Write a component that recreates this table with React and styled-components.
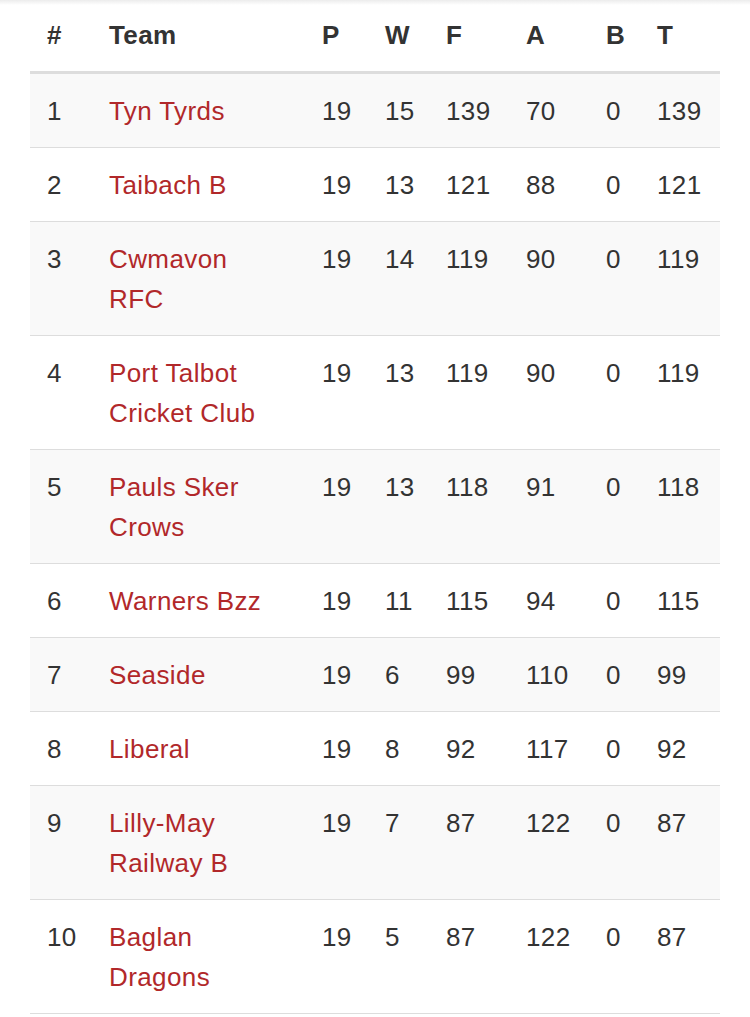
import React from 'react'
import styled, { createGlobalStyle } from 'styled-components';

const GlobalStyle = createGlobalStyle`
  html, body {
    margin:0;
    padding:0;
    background:#fff;
  }
  body {
    font-family:"Liberation Sans", Arial, Helvetica, sans-serif;
    color:#333;
  }
`;

const columns = [
  { key: 'pos', label: '#', width: 62 },
  { key: 'team', label: 'Team', width: 213 },
  { key: 'p', label: 'P', width: 63 },
  { key: 'w', label: 'W', width: 61 },
  { key: 'f', label: 'F', width: 80 },
  { key: 'a', label: 'A', width: 80 },
  { key: 'b', label: 'B', width: 51 },
  { key: 't', label: 'T', width: 80 },
];

// team names split where the reference wraps them
const rows = [
  [1, ['Tyn Tyrds'], 19, 15, 139, 70, 0, 139],
  [2, ['Taibach B'], 19, 13, 121, 88, 0, 121],
  [3, ['Cwmavon', 'RFC'], 19, 14, 119, 90, 0, 119],
  [4, ['Port Talbot', 'Cricket Club'], 19, 13, 119, 90, 0, 119],
  [5, ['Pauls Sker', 'Crows'], 19, 13, 118, 91, 0, 118],
  [6, ['Warners Bzz'], 19, 11, 115, 94, 0, 115],
  [7, ['Seaside'], 19, 6, 99, 110, 0, 99],
  [8, ['Liberal'], 19, 8, 92, 117, 0, 92],
  [9, ['Lilly-May', 'Railway B'], 19, 7, 87, 122, 0, 87],
  [10, ['Baglan', 'Dragons'], 19, 5, 87, 122, 0, 87],
];

export default function App() {
  return (
    <>
      <GlobalStyle />
      <Page>
        <LeagueTable>
          <colgroup>
            {columns.map((c) => <col key={c.key} style={{width: c.width}} />)}
          </colgroup>
          <thead>
            <tr>
              {columns.map((c) => <HeadCell key={c.key}>{c.label}</HeadCell>)}
            </tr>
          </thead>
          <tbody>
            {rows.map((row, i) => (
              <Row key={row[0]} $striped={i % 2 === 0}>
                {row.map((value, j) => (
                  <Cell key={j}>
                    {j === 1 ? (
                      <TeamLink href="#">
                        {value.map((line, k) => <TeamLine key={k}>{line}</TeamLine>)}
                      </TeamLink>
                    ) : value}
                  </Cell>
                ))}
              </Row>
            ))}
          </tbody>
        </LeagueTable>
      </Page>
    </>
  )
}

const Page = styled.div`
  width:750px;
  min-height:1017px;
  padding:0 30px;
  box-sizing:border-box;
  background:linear-gradient(to bottom, #ececec 0, #fff 5px);
`;

const LeagueTable = styled.table`
  width:690px;
  table-layout:fixed;
  border-collapse:collapse;
  font-family:"Liberation Sans", Arial, Helvetica, sans-serif;
  font-size:26px;
  line-height:40px;
  letter-spacing:0.4px;
  color:#333;
`;

const HeadCell = styled.th`
  text-align:left;
  font-weight:700;
  font-family:inherit;
  color:#333;
  padding:15px 17px 16px;
  border-bottom:3px solid #ddd;
  vertical-align:bottom;
`;

const Row = styled.tr`
  background:${props => props.$striped ? '#f9f9f9' : '#fff'};
  border-bottom:1px solid #ddd;
`;

const Cell = styled.td`
  padding:17px 17px 16px;
  vertical-align:top;
  font-family:inherit;
  color:#333;
`;

const TeamLink = styled.a`
  color:#b1282a;
  text-decoration:none;
`;

const TeamLine = styled.span`
  display:block;
  white-space:nowrap;
`;
